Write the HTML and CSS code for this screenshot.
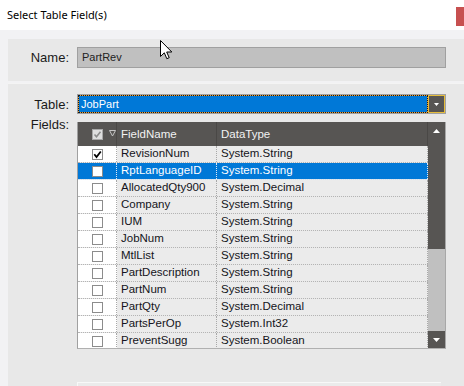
FILE: index.html
```html
<!DOCTYPE html>
<html lang="en">
<head>
    <meta charset="UTF-8">
    <title>Select Table Field(s)</title>
    <link rel="stylesheet" href="styles.css">
</head>
<body>
    <div id="dialog">
        <div class="title-bar">
            <span class="title-text">Select Table Field(s)</span>
            <div class="btn-close">
                <svg width="10" height="10" viewBox="0 0 10 10"><path d="M0 0 L10 10 M10 0 L0 10" stroke="#fff" stroke-width="1.2"/></svg>
            </div>
        </div>

        <div class="panel panel-name">
            <div class="field-row">
                <label class="field-label">Name:</label>
                <div class="name-input">PartRev</div>
            </div>
        </div>

        <div class="panel panel-table">
            <div class="field-row">
                <label class="field-label">Table:</label>
                <div class="select">
                    <div class="select-value">JobPart</div>
                    <div class="select-btn">
                        <svg width="5" height="3" viewBox="0 0 5 3"><polygon points="0,0 5,0 2.5,3" fill="#fff"/></svg>
                    </div>
                </div>
            </div>

            <div class="field-row fields-row">
                <label class="field-label fields-label">Fields:</label>
                <div class="grid">
                    <div class="grid-main">
                        <div class="grid-head">
                            <div class="cell c-chk">
                                <span class="cb cb-head">
                                    <svg width="9" height="9" viewBox="0 0 9 9"><polyline points="1.5,4.5 3.5,6.8 7.5,1.8" fill="none" stroke="#8d8d8d" stroke-width="1.6"/></svg>
                                </span>
                                <svg class="filter-icon" width="7" height="7" viewBox="0 0 7 7"><polygon points="0.5,0.5 6.5,0.5 3.5,6" fill="none" stroke="#c4c4c4" stroke-width="1"/></svg>
                            </div>
                            <div class="cell c-name">FieldName</div>
                            <div class="cell c-type">DataType</div>
                        </div>
                        <div class="grid-body" id="grid-body"></div>
                    </div>
                    <div class="scrollbar">
                        <div class="sb-btn">
                            <svg width="7" height="4" viewBox="0 0 7 4"><polygon points="0,4 7,4 3.5,0" fill="#fff"/></svg>
                        </div>
                        <div class="sb-thumb"></div>
                        <div class="sb-track"></div>
                        <div class="sb-btn">
                            <svg width="7" height="4" viewBox="0 0 7 4"><polygon points="0,0 7,0 3.5,4" fill="#fff"/></svg>
                        </div>
                    </div>
                </div>
            </div>

            <div class="next-box"></div>
        </div>

        <svg class="cursor" width="13" height="20" viewBox="0 0 13 20">
            <path d="M0.5 0.5 L0.5 16.5 L4.3 12.8 L6.8 18.7 L9.2 17.7 L6.7 12 L11.8 12 Z" fill="#fff" stroke="#000" stroke-width="1"/>
        </svg>
    </div>

    <script>
    const fields = [
        ['RevisionNum', 'System.String'],
        ['RptLanguageID', 'System.String'],
        ['AllocatedQty900', 'System.Decimal'],
        ['Company', 'System.String'],
        ['IUM', 'System.String'],
        ['JobNum', 'System.String'],
        ['MtlList', 'System.String'],
        ['PartDescription', 'System.String'],
        ['PartNum', 'System.String'],
        ['PartQty', 'System.Decimal'],
        ['PartsPerOp', 'System.Int32'],
        ['PreventSugg', 'System.Boolean']
    ];
    const checkSvg = '<svg width="9" height="9" viewBox="0 0 9 9"><polyline points="1.3,4.3 3.5,7 7.8,1.5" fill="none" stroke="#000" stroke-width="1.8"/></svg>';

    let body = document.getElementById('grid-body');
    for (let i = 0; i < fields.length; i++) {
        let row = document.createElement('div');
        row.className = 'grid-row';
        if (i === 1) row.classList.add('selected');
        row.innerHTML = `<div class="cell c-chk"><span class="cb">${i === 0 ? checkSvg : ''}</span></div>
            <div class="cell c-name">${fields[i][0]}</div>
            <div class="cell c-type">${fields[i][1]}</div>`;
        body.appendChild(row);
    }
    </script>
</body>
</html>
```

FILE: styles.css
```css
body {
    margin: 0;
    width: 464px;
    height: 386px;
    overflow: hidden;
    background-color: #f2f2f4;
}

#dialog {
    position: relative;
    width: 486px;
    height: 386px;
    font-family: "Liberation Sans", Arial, sans-serif;
    color: #1a1a1a;
}

.title-bar {
    display: flex;
    align-items: flex-start;
    height: 30px;
    background-color: #fff;
}
.title-text {
    padding-left: 7px;
    line-height: 30px;
    font-family: "Noto Sans", sans-serif;
    font-size: 11px;
    color: #000;
}
.btn-close {
    display: flex;
    align-items: center;
    justify-content: center;
    margin-left: auto;
    margin-top: 7px;
    width: 30px;
    height: 19px;
    background-color: #c75050;
}

.panel {
    margin-left: 8px;
    background-color: #e8e8e8;
}
.panel-name {
    margin-top: 9px;
    height: 42px;
    padding-top: 8px;
    box-sizing: border-box;
}
.panel-table {
    margin-top: 2px;
    height: 303px;
    padding-top: 10px;
    box-sizing: border-box;
    border-top: 1px solid #f4f4f4;
}

.field-row {
    display: flex;
    align-items: center;
}
.field-label {
    width: 61px;
    margin-right: 8px;
    text-align: right;
    font-size: 13px;
    color: #1a1a1a;
}

.name-input {
    width: 369px;
    height: 21px;
    box-sizing: border-box;
    padding-left: 4px;
    border: 1px solid #a0a0a0;
    background-color: #c0c0c0;
    font-size: 11px;
    line-height: 19px;
    color: #222;
}

.select {
    display: flex;
    width: 369px;
    height: 20px;
    box-sizing: border-box;
    border: 1px solid #a0a0a0;
}
.select-value {
    flex: 1;
    padding-left: 2px;
    border: 1px dotted #1a1a1a;
    background: linear-gradient(#0078d7, #0078d7) padding-box, #f0a030 border-box;
    font-size: 11px;
    line-height: 16px;
    color: #fff;
}
.select-btn {
    display: flex;
    align-items: center;
    justify-content: center;
    width: 17px;
    box-sizing: border-box;
    border: 1px solid #e6bd3c;
    background-color: #575553;
}

.fields-row {
    align-items: flex-start;
    margin-top: 8px;
}
.fields-label {
    margin-top: -5px;
}

.grid {
    display: flex;
    width: 369px;
    height: 227px;
    box-sizing: border-box;
    border-left: 1px solid #a0a0a0;
    border-right: 1px solid #a8a8a8;
    border-bottom: 1px solid #b0b0b0;
    font-size: 11.5px;
}
.grid-main {
    width: 350px;
}
.grid-head {
    display: flex;
    height: 24px;
    background-color: #575553;
    color: #f2f2f2;
    line-height: 24px;
}
.grid-head .cell {
    border-right: 1px solid #4a4846;
}
.grid-body {
    height: 202px;
    overflow: hidden;
}
.grid-row {
    display: flex;
    height: 17px;
    box-sizing: border-box;
    border-bottom: 1px dotted #b4b4b4;
    line-height: 15px;
    color: #141420;
}
.cell {
    box-sizing: border-box;
    border-right: 1px dotted #a8a8a8;
    padding-left: 4px;
    white-space: nowrap;
    overflow: hidden;
}
.c-chk {
    display: flex;
    align-items: center;
    width: 39px;
    padding-left: 14px;
}
.c-name {
    width: 100px;
}
.c-type {
    width: 211px;
}
.grid-row .c-chk {
    background-color: #fff;
}
.grid-row .c-name,
.grid-row .c-type {
    background-color: #ebebeb;
}
.grid-row.selected .cell {
    background-color: #0078d7;
    color: #fff;
    border-right-color: #dfe9f5;
}
.grid-row.selected {
    border-bottom-color: #d0e0f2;
}

.cb {
    display: flex;
    align-items: center;
    justify-content: center;
    width: 11px;
    height: 11px;
    box-sizing: border-box;
    border: 1px solid #8c8c8c;
    background-color: #fff;
}
.cb-head {
    border-color: #a8a8a8;
    background-color: #dedede;
}
.filter-icon {
    margin-left: 6px;
    margin-top: -2px;
}

.scrollbar {
    display: flex;
    flex-direction: column;
    width: 17px;
}
.sb-btn {
    display: flex;
    align-items: center;
    justify-content: center;
    height: 17px;
    background-color: #575553;
}
.sb-thumb {
    height: 110px;
    background-color: #575553;
}
.sb-track {
    flex: 1;
    background-color: #c0c0c0;
}

.next-box {
    margin-top: 33px;
    margin-left: 69px;
    width: 363px;
    height: 20px;
    border-top: 1px solid #f8f8f8;
    border-left: 1px solid #f8f8f8;
    background-color: #ebebeb;
}

.cursor {
    position: absolute;
    left: 160px;
    top: 40px;
}
```
